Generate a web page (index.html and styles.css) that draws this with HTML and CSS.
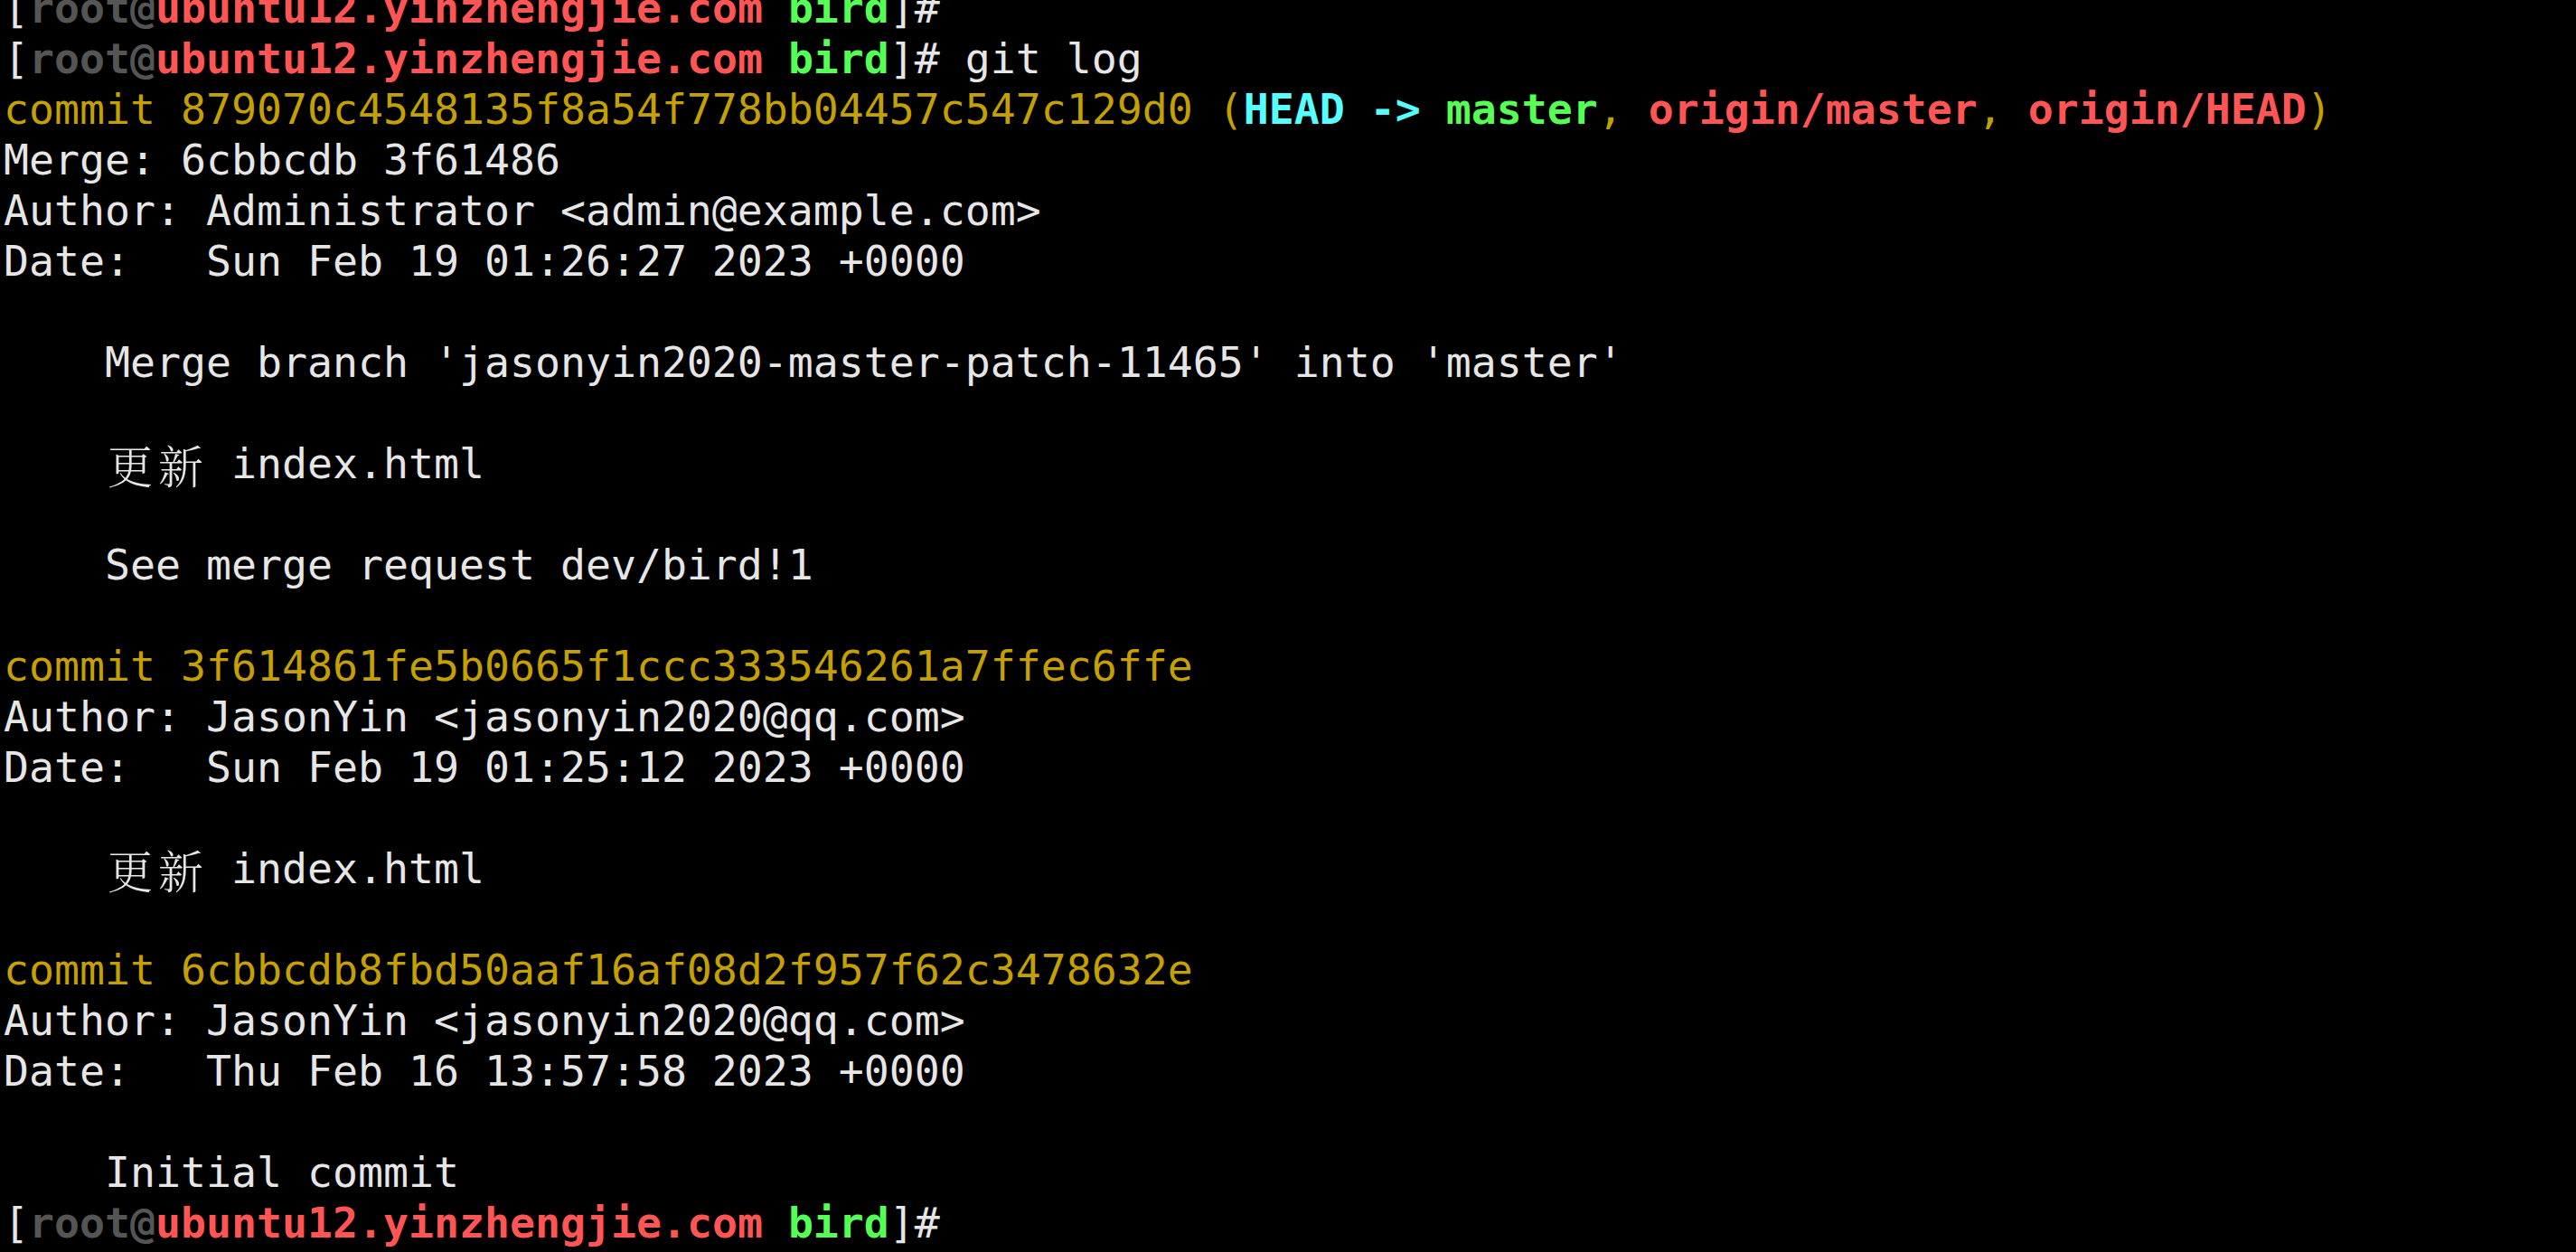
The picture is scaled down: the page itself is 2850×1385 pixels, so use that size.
FILE: index.html
```html
<!DOCTYPE html>
<html>
<head>
<meta charset="utf-8">
<link rel="stylesheet" href="styles.css">
</head>
<body>
<div class="term">
<div class="ln">[<span class="u">root@</span><span class="h">ubuntu12.yinzhengjie.com</span> <span class="d">bird</span>]#</div>
<div class="ln">[<span class="u">root@</span><span class="h">ubuntu12.yinzhengjie.com</span> <span class="d">bird</span>]# git log</div>
<div class="ln"><span class="y">commit 879070c4548135f8a54f778bb04457c547c129d0 (<span class="c">HEAD -&gt; </span><span class="g">master</span>, <span class="r">origin/master</span>, <span class="r">origin/HEAD</span>)</span></div>
<div class="ln">Merge: 6cbbcdb 3f61486</div>
<div class="ln">Author: Administrator &lt;admin@example.com&gt;</div>
<div class="ln">Date:   Sun Feb 19 01:26:27 2023 +0000</div>
<div class="ln"></div>
<div class="ln">    Merge branch 'jasonyin2020-master-patch-11465' into 'master'</div>
<div class="ln"></div>
<div class="ln">    <span class="cjk">更新</span> index.html</div>
<div class="ln"></div>
<div class="ln">    See merge request dev/bird!1</div>
<div class="ln"></div>
<div class="ln"><span class="y">commit 3f614861fe5b0665f1ccc333546261a7ffec6ffe</span></div>
<div class="ln">Author: JasonYin &lt;jasonyin2020@qq.com&gt;</div>
<div class="ln">Date:   Sun Feb 19 01:25:12 2023 +0000</div>
<div class="ln"></div>
<div class="ln">    <span class="cjk">更新</span> index.html</div>
<div class="ln"></div>
<div class="ln"><span class="y">commit 6cbbcdb8fbd50aaf16af08d2f957f62c3478632e</span></div>
<div class="ln">Author: JasonYin &lt;jasonyin2020@qq.com&gt;</div>
<div class="ln">Date:   Thu Feb 16 13:57:58 2023 +0000</div>
<div class="ln"></div>
<div class="ln">    Initial commit</div>
<div class="ln">[<span class="u">root@</span><span class="h">ubuntu12.yinzhengjie.com</span> <span class="d">bird</span>]#</div>
</div>
</body>
</html>
```
FILE: styles.css
```css
html, body {
  margin: 0;
  padding: 0;
  background: #000;
  overflow: hidden;
}
.term {
  margin-top: -19px;
  padding-left: 4px;
  font-family: "DejaVu Sans Mono", "Liberation Mono", monospace;
  font-size: 46.5px;
  color: #e6e6e6;
}
.ln {
  height: 56px;
  line-height: 56px;
  white-space: pre;
}
.u { color: #555555; font-weight: bold; }
.h { color: #ff5555; font-weight: bold; }
.d { color: #55ff55; font-weight: bold; }
.y { color: #c4a000; }
.c { color: #55ffff; font-weight: bold; }
.g { color: #55ff55; font-weight: bold; }
.r { color: #ff5555; font-weight: bold; }
.cjk {
  display: inline-block;
  box-sizing: border-box;
  width: 112px;
  padding-left: 3px;
  overflow: visible;
  font-family: "Noto Serif CJK SC", "Noto Sans CJK SC", sans-serif;
  font-size: 50px;
  font-weight: 300;
  letter-spacing: 6px;
  line-height: 56px;
  vertical-align: top;
}
```
